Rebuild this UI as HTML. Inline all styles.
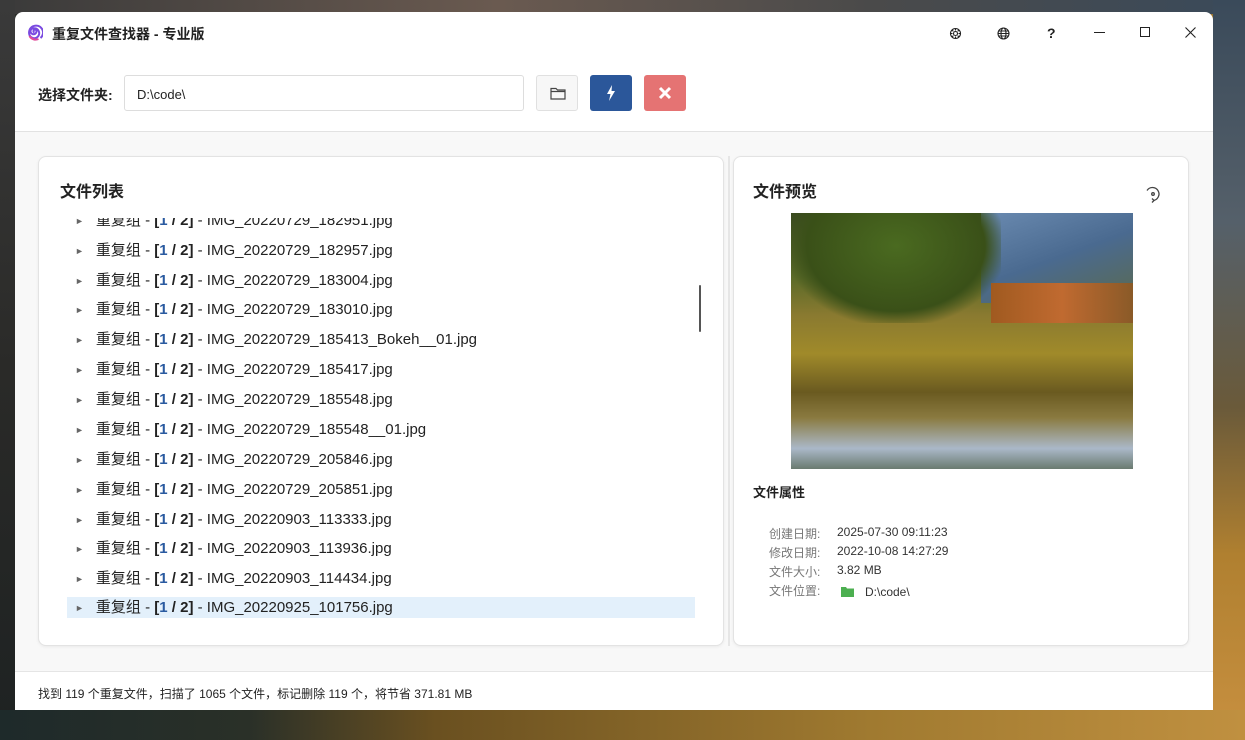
<!DOCTYPE html>
<html><head><meta charset="utf-8"><style>
*{margin:0;padding:0;box-sizing:border-box}
body{width:1245px;height:740px;overflow:hidden;position:relative;font-family:"Liberation Sans","Noto Sans CJK SC",sans-serif;
background:linear-gradient(90deg,#2a2e2a 0%,#4a4030 30%,#6a5a38 60%,#8a6a30 85%,#a07830 100%);}
.bgtop{position:absolute;left:0;top:0;width:1245px;height:14px;background:linear-gradient(90deg,#3a3a3a,#6a5a50 40%,#4a4a4a 70%,#3a4a5a)}
.bgright{position:absolute;left:1213px;top:0;width:32px;height:740px;background:linear-gradient(180deg,#3a4a5a 0%,#55606a 30%,#6a5a3a 55%,#b08030 75%,#c89040 100%)}
.bgbot{position:absolute;left:0;top:710px;width:1245px;height:30px;background:linear-gradient(90deg,#1e2a2a 0%,#2a3028 20%,#6a5020 35%,#a07a30 70%,#c09040 100%)}
.bgleft{position:absolute;left:0;top:0;width:15px;height:740px;background:linear-gradient(180deg,#3a3a3a,#2a2a28 50%,#1e2222)}
.win{position:absolute;left:15px;top:12px;width:1198px;height:698px;background:#fff;border-radius:8px;overflow:hidden}
.title{position:absolute;left:52px;top:24px;font-size:14px;font-weight:bold;color:#222}
.ico{position:absolute;font-size:13px;color:#222}
.lbl{position:absolute;left:38px;top:85px;font-size:14px;font-weight:bold;color:#222}
.inp{position:absolute;left:124px;top:75px;width:400px;height:36px;border:1px solid #ddd;border-radius:3px;font-size:13px;padding:11px 12px;color:#222}
.btn{position:absolute;top:75px;width:42px;height:36px;border-radius:3px}
.main{position:absolute;left:15px;top:131px;width:1198px;height:540px;background:#f8f8f8;border-top:1px solid #e2e2e2}
.card{position:absolute;background:#fff;border:1px solid #e3e3e3;border-radius:8px;box-shadow:0 1px 3px rgba(0,0,0,.06)}
.h{position:absolute;font-size:16px;font-weight:bold;color:#222}
.row{position:absolute;left:67px;width:628px;height:22px;font-size:15px;color:#222;line-height:22px;padding-left:8px;white-space:nowrap}
.row .tri{color:#666;font-size:9px;margin-right:12px;vertical-align:1px}
.row b{font-weight:bold}.row .n{color:#2a5aa0}
.status{position:absolute;left:15px;top:671px;width:1198px;height:39px;background:#fff;border-top:1px solid #e5e5e5;font-size:12px;color:#222;padding:13px 23px}
.prop{position:absolute;left:769px;font-size:12px;color:#777}
.pv{position:absolute;left:837px;font-size:12px;color:#333}
</style></head><body>
<div class="bgtop"></div><div class="bgleft"></div><div class="bgright"></div><div class="bgbot"></div>
<div class="win"></div>
<svg style="position:absolute;left:26px;top:24px" width="17" height="17" viewBox="0 0 17 17"><path d="M8.5 8.5 a1.5 1.5 0 1 1 2 -1.5 a3 3 0 1 1 -5 -2 a5 5 0 1 1 -2 6 a7 7 0 1 1 11 3" fill="none" stroke="#7a4ae0" stroke-width="2"/><path d="M3.5 12 a7 7 0 0 0 9 3" fill="none" stroke="#e04a9a" stroke-width="2"/></svg>
<div class="title">重复文件查找器 - 专业版</div>
<svg style="position:absolute;left:949px;top:27px" width="13" height="13" viewBox="0 0 13 13" fill="none" stroke="#222" stroke-width="1.1"><circle cx="6.5" cy="6.5" r="2"/><circle cx="6.5" cy="6.5" r="5"/><path d="M6.5 1.5v2M6.5 9.5v2M1.5 6.5h2M9.5 6.5h2M3 3l1.4 1.4M8.6 8.6L10 10M10 3L8.6 4.4M4.4 8.6L3 10"/></svg>
<svg style="position:absolute;left:997px;top:27px" width="13" height="13" viewBox="0 0 13 13" fill="none" stroke="#222" stroke-width="1.1"><circle cx="6.5" cy="6.5" r="5.5"/><ellipse cx="6.5" cy="6.5" rx="2.5" ry="5.5"/><path d="M1 6.5h11M1.8 4h9.4M1.8 9h9.4"/></svg>
<div class="ico" style="left:1047px;top:25px;font-weight:bold;font-size:14px">?</div>
<div style="position:absolute;left:1094px;top:32px;width:11px;height:1px;background:#222"></div>
<div style="position:absolute;left:1140px;top:27px;width:10px;height:10px;border:1px solid #222"></div>
<svg style="position:absolute;left:1185px;top:27px" width="11" height="11" viewBox="0 0 11 11" stroke="#222" stroke-width="1.1"><path d="M0.5 0.5l10 10M10.5 0.5l-10 10"/></svg>
<div class="lbl">选择文件夹:</div>
<div class="inp">D:\code\</div>
<div class="btn" style="left:536px;background:#f7f7f7;border:1px solid #e0e0e0"><svg style="position:absolute;left:13px;top:11px" width="16" height="13" viewBox="0 0 16 13" fill="none" stroke="#444" stroke-width="1.2"><path d="M1 1.5h5l1.5 1.5h7.5v9h-14z M1 4.5h14"/></svg></div>
<div class="btn" style="left:590px;background:#2b579a"><svg style="position:absolute;left:16px;top:10px" width="10" height="16" viewBox="0 0 10 16"><path d="M6 0L1 9h3.5L3 16l6-10H5.5z" fill="#fff"/></svg></div>
<div class="btn" style="left:644px;background:#e57373"><svg style="position:absolute;left:14px;top:11px" width="14" height="14" viewBox="0 0 14 14" stroke="#fff" stroke-width="3"><path d="M2 2l10 10M12 2L2 12"/></svg></div>
<div class="main"></div>
<div class="card" style="left:38px;top:156px;width:686px;height:490px"></div>
<div class="card" style="left:733px;top:156px;width:456px;height:490px"></div>
<div style="position:absolute;left:728px;top:156px;width:2px;height:490px;background:#e6e6e6"></div>
<div class="h" style="left:60px;top:178px">文件列表</div>
<div class="h" style="left:753px;top:178px">文件预览</div>
<svg style="position:absolute;left:1143px;top:184px" width="20" height="20" viewBox="0 0 20 20" fill="none" stroke="#444" stroke-width="1.3"><path d="M4 6.5A6.5 6.5 0 1 1 10 16.5"/><circle cx="10" cy="10" r="1.3"/><path d="M9 14.5l2 2-2 2"/></svg>
<div style="position:absolute;left:39px;top:218px;width:684px;height:400px;overflow:hidden">
<div class="row" style="left:28px;top:-8px"><span class="tri">►</span>重复组 - <b>[<span class="n">1</span> / 2]</b> - IMG_20220729_182951.jpg</div>
<div class="row" style="left:28px;top:22px"><span class="tri">►</span>重复组 - <b>[<span class="n">1</span> / 2]</b> - IMG_20220729_182957.jpg</div>
<div class="row" style="left:28px;top:52px"><span class="tri">►</span>重复组 - <b>[<span class="n">1</span> / 2]</b> - IMG_20220729_183004.jpg</div>
<div class="row" style="left:28px;top:81px"><span class="tri">►</span>重复组 - <b>[<span class="n">1</span> / 2]</b> - IMG_20220729_183010.jpg</div>
<div class="row" style="left:28px;top:111px"><span class="tri">►</span>重复组 - <b>[<span class="n">1</span> / 2]</b> - IMG_20220729_185413_Bokeh__01.jpg</div>
<div class="row" style="left:28px;top:141px"><span class="tri">►</span>重复组 - <b>[<span class="n">1</span> / 2]</b> - IMG_20220729_185417.jpg</div>
<div class="row" style="left:28px;top:171px"><span class="tri">►</span>重复组 - <b>[<span class="n">1</span> / 2]</b> - IMG_20220729_185548.jpg</div>
<div class="row" style="left:28px;top:201px"><span class="tri">►</span>重复组 - <b>[<span class="n">1</span> / 2]</b> - IMG_20220729_185548__01.jpg</div>
<div class="row" style="left:28px;top:231px"><span class="tri">►</span>重复组 - <b>[<span class="n">1</span> / 2]</b> - IMG_20220729_205846.jpg</div>
<div class="row" style="left:28px;top:261px"><span class="tri">►</span>重复组 - <b>[<span class="n">1</span> / 2]</b> - IMG_20220729_205851.jpg</div>
<div class="row" style="left:28px;top:291px"><span class="tri">►</span>重复组 - <b>[<span class="n">1</span> / 2]</b> - IMG_20220903_113333.jpg</div>
<div class="row" style="left:28px;top:320px"><span class="tri">►</span>重复组 - <b>[<span class="n">1</span> / 2]</b> - IMG_20220903_113936.jpg</div>
<div class="row" style="left:28px;top:350px"><span class="tri">►</span>重复组 - <b>[<span class="n">1</span> / 2]</b> - IMG_20220903_114434.jpg</div>
<div class="row" style="left:28px;top:379px;background:#e3f0fb"><span class="tri">►</span>重复组 - <b>[<span class="n">1</span> / 2]</b> - IMG_20220925_101756.jpg</div>
</div>
<div style="position:absolute;left:699px;top:285px;width:2px;height:47px;background:#555;border-radius:1px"></div>
<div style="position:absolute;left:791px;top:213px;width:342px;height:256px;overflow:hidden;background:linear-gradient(180deg,#3a4a20 0%,#5a6a28 25%,#8a7a30 40%,#a08a2a 55%,#6a5a20 70%,#8a7a40 80%,#aab8c8 92%,#6a7a70 100%)">
<div style="position:absolute;left:190px;top:0;width:152px;height:90px;background:linear-gradient(160deg,#6a8ab0,#4a6a90 50%,#5a6a50)"></div>
<div style="position:absolute;left:0;top:0;width:210px;height:110px;background:radial-gradient(ellipse at 50% 30%,#4a6a20,#3a5018 60%,rgba(58,80,24,0) 75%)"></div>
<div style="position:absolute;left:200px;top:70px;width:142px;height:40px;background:linear-gradient(90deg,#a05a20,#c06a30,#8a5a28)"></div>
</div>
<div style="position:absolute;left:753px;top:482px;font-size:13px;font-weight:bold;color:#222">文件属性</div>
<div class="prop" style="top:525px">创建日期:</div><div class="pv" style="top:525px">2025-07-30 09:11:23</div>
<div class="prop" style="top:544px">修改日期:</div><div class="pv" style="top:544px">2022-10-08 14:27:29</div>
<div class="prop" style="top:563px">文件大小:</div><div class="pv" style="top:563px">3.82 MB</div>
<div class="prop" style="top:582px">文件位置:</div>
<svg style="position:absolute;left:841px;top:587px" width="13" height="10" viewBox="0 0 13 10"><path d="M0 0h5l1 1.5h7V10H0z" fill="#4caf50"/></svg>
<div class="pv" style="left:865px;top:585px">D:\code\</div>
<div class="status">找到 119 个重复文件，扫描了 1065 个文件，标记删除 119 个，将节省 371.81 MB</div>
</body></html>
